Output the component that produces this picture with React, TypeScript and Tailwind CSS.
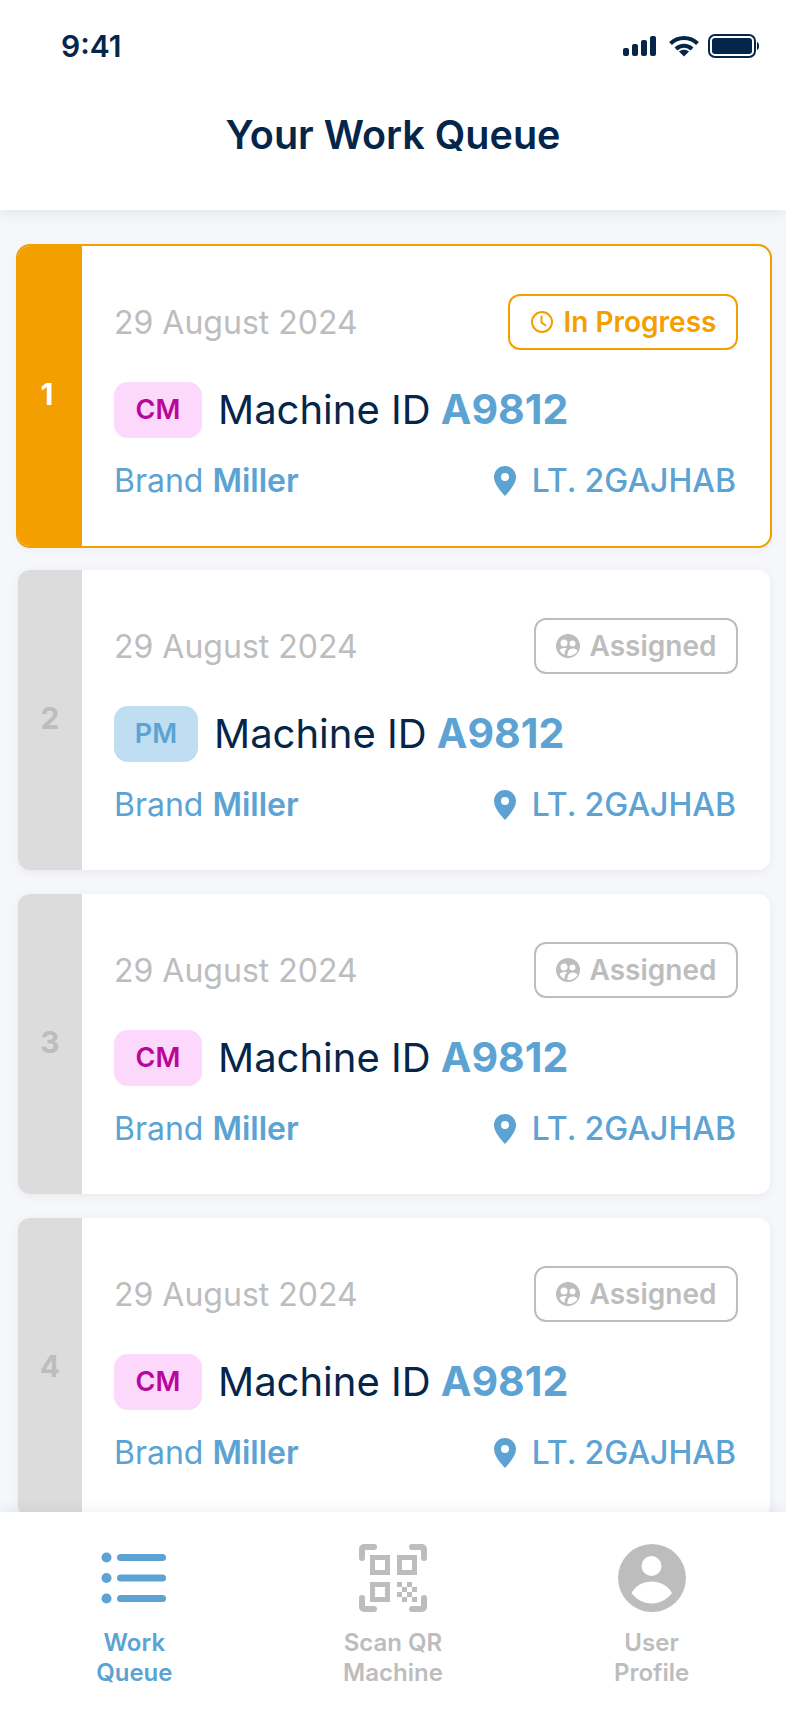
const NAVY = "#05264a";

type Job = {
  position: number;
  tag: "CM" | "PM";
  active?: boolean;
};

const JOBS: Job[] = [
  { position: 1, tag: "CM", active: true },
  { position: 2, tag: "PM" },
  { position: 3, tag: "CM" },
  { position: 4, tag: "CM" },
];

const StatusIcons = () => (
  <div className="flex items-center">
    <svg width="34" height="20" viewBox="0 0 34 20" fill={NAVY}>
      <rect x="0" y="12" width="6" height="8" rx="2" />
      <rect x="9" y="8" width="6" height="12" rx="2" />
      <rect x="18" y="4" width="6" height="16" rx="2" />
      <rect x="27" y="0" width="6" height="20" rx="2" />
    </svg>
    <svg className="ml-[12px]" width="30" height="22" viewBox="0 0 30 22" fill="none" stroke={NAVY} strokeWidth="4">
      <path d="M1.5 8.5C9 1 21 1 28.5 8.5" />
      <path d="M7 14c4.500-4.300 11.500-4.300 16 0" />
      <path d="M15 21.500l-5-5c2.800-2.200 7.200-2.200 10 0z" fill={NAVY} stroke="none" />
    </svg>
    <svg className="ml-[9px]" width="51" height="24" viewBox="0 0 51 24" fill="none">
      <rect x="1" y="1" width="46" height="22" rx="6" stroke={NAVY} strokeWidth="2" />
      <rect x="4" y="4" width="40" height="16" rx="3" fill={NAVY} />
      <path d="M49 8c1.500.5 2 2 2 4s-.5 3.500-2 4z" fill={NAVY} />
    </svg>
  </div>
);

const ClockIcon = () => (
  <svg width="24" height="24" viewBox="0 0 24 24" fill="none" stroke="currentColor" strokeWidth="2" strokeLinecap="round">
    <circle cx="12" cy="12" r="10" />
    <path d="M11.500 6.500V12.500L15.500 15.500" />
  </svg>
);

const AssignedIcon = () => (
  <svg width="24" height="24" viewBox="0 0 24 24" fill="currentColor">
    <path
      fillRule="evenodd"
      d="M12 0a12 12 0 1 0 0 24a12 12 0 0 0 0-24zM8 5.500a3.500 3.500 0 1 1 0 7a3.500 3.500 0 0 1 0-7zM16.500 6.500a3 3 0 1 1 0 6a3 3 0 0 1 0-6zM3.500 16c1-1.500 5-2.500 7.500-1.500c-1.500 1-2.500 3-2.500 6.500c-2.500-1-4-3-5-5zM11.500 22c-.5-4 1.500-7.500 5-7.500s4.500 1.500 5 2.500c-1.500 3-5.500 5.300-10 5z"
    />
  </svg>
);

const PinIcon = () => (
  <svg width="22" height="30" viewBox="0 0 22 30" fill="currentColor">
    <path
      fillRule="evenodd"
      d="M11 0C4.900 0 0 4.900 0 11c0 7.500 8 15.500 11 19c3-3.500 11-11.500 11-19C22 4.900 17.100 0 11 0zm0 7a4 4 0 1 1 0 8a4 4 0 0 1 0-8z"
    />
  </svg>
);

const ListIcon = () => (
  <svg width="66" height="52" viewBox="0 0 66 52" fill="#5ca3d3">
    <circle cx="5.500" cy="5.500" r="5" />
    <circle cx="5.500" cy="26" r="5" />
    <circle cx="5.500" cy="46.500" r="5" />
    <rect x="16" y="2" width="49" height="7" rx="3.500" />
    <rect x="16" y="22.500" width="49" height="7" rx="3.500" />
    <rect x="16" y="43" width="49" height="7" rx="3.500" />
  </svg>
);

const QrIcon = () => (
  <svg width="68" height="68" viewBox="0 0 68 68" fill="none">
    <g stroke="#bdbdbd" strokeWidth="6" strokeLinecap="round" strokeLinejoin="round">
      <path d="M3 14V5a2 2 0 0 1 2-2h10" />
      <path d="M53 3h10a2 2 0 0 1 2 2v9" />
      <path d="M3 54v9a2 2 0 0 0 2 2h10" />
      <path d="M53 65h10a2 2 0 0 0 2-2v-9" />
    </g>
    <g stroke="#bdbdbd" strokeWidth="5">
      <rect x="13.500" y="13.500" width="15" height="15" />
      <rect x="40.500" y="13.500" width="15" height="15" />
      <rect x="13.500" y="40.500" width="15" height="15" />
    </g>
    <g fill="#bdbdbd">
      <rect x="38" y="38" width="5" height="5" />
      <rect x="48" y="38" width="5" height="5" />
      <rect x="43" y="43" width="5" height="5" />
      <rect x="53" y="43" width="5" height="5" />
      <rect x="38" y="48" width="5" height="5" />
      <rect x="48" y="48" width="5" height="5" />
      <rect x="43" y="53" width="5" height="5" />
      <rect x="53" y="53" width="5" height="5" />
    </g>
  </svg>
);

const UserIcon = () => (
  <svg width="68" height="68" viewBox="0 0 68 68">
    <circle cx="34" cy="34" r="34" fill="#bdbdbd" />
    <circle cx="33.500" cy="22" r="10" fill="#fff" />
    <path d="M13.500 49C18 41 26 37.500 33.500 37.500S49.500 41 54 49C49.500 55 42 59.500 33.500 59.500S18 55 13.500 49z" fill="#fff" />
  </svg>
);

const WorkCard = ({ job }: { job: Job }) => (
  <article
    className={`flex h-[300px] shrink-0 overflow-hidden rounded-[12px] bg-white shadow-[0_2px_10px_rgba(15,23,42,0.06)] ${
      job.active ? "outline-2 outline-[#f39f00]" : ""
    }`}
  >
    <div
      className={`flex w-[64px] shrink-0 items-center justify-center pb-[4px] text-[30px] font-bold ${
        job.active ? "bg-[#f39f00] pr-[6px] text-white" : "bg-[#dcdcdc] text-[#bdbdbd]"
      }`}
    >
      {job.position}
    </div>
    <div className="flex min-w-0 flex-1 flex-col pl-[32px] pr-[32px] pt-[48px]">
      <div className="flex h-[56px] items-center justify-between">
        <span className="translate-y-[1px] text-[32px] text-[#bdbdbd]">29 August 2024</span>
        {job.active ? (
          <span className="flex h-[56px] w-[230px] items-center justify-center gap-[10px] rounded-[12px] border-2 border-[#f39f00] text-[28px] font-semibold text-[#f39f00]">
            <ClockIcon />
            In Progress
          </span>
        ) : (
          <span className="flex h-[56px] w-[204px] items-center justify-center gap-[10px] rounded-[12px] border-2 border-[#bdbdbd] text-[28px] font-semibold text-[#bdbdbd]">
            <AssignedIcon />
            Assigned
          </span>
        )}
      </div>
      <div className="mt-[32px] flex h-[56px] items-center">
        {job.tag === "CM" ? (
          <span className="flex h-[56px] w-[88px] items-center justify-center rounded-[14px] bg-[#fdd8fd] text-[27px] font-semibold text-[#b9079b]">
            CM
          </span>
        ) : (
          <span className="flex h-[56px] w-[84px] items-center justify-center rounded-[14px] bg-[#c0def1] text-[27px] font-semibold text-[#5ca3d3]">
            PM
          </span>
        )}
        <span className="ml-[16px] text-[40px] text-[#05264a]">
          Machine ID <span className="-ml-[1px] text-[41px] font-bold text-[#5ca3d3]">A9812</span>
        </span>
      </div>
      <div className="mt-[15px] flex h-[56px] items-center justify-between pr-[2px] text-[32px] text-[#5ca3d3]">
        <span>
          Brand <span className="font-semibold">Miller</span>
        </span>
        <span className="flex items-center gap-[16px] font-medium">
          <PinIcon />
          LT. 2GAJHAB
        </span>
      </div>
    </div>
  </article>
);

const NavItem = ({ icon, lines, active }: { icon: React.ReactNode; lines: string[]; active?: boolean }) => (
  <div className={`flex flex-col items-center ${active ? "text-[#5ca3d3]" : "text-[#bdbdbd]"}`}>
    <div className="flex h-[68px] items-center justify-center">{icon}</div>
    <div className="mt-[16px] text-center text-[24px] font-semibold leading-[30px]">
      {lines.map((line) => (
        <div key={line}>{line}</div>
      ))}
    </div>
  </div>
);

export default function App() {
  return (
    <div className="flex h-[1712px] w-[786px] flex-col overflow-hidden bg-[#f5f7fa] font-['Inter',sans-serif]">
      <header className="relative z-10 h-[210px] shrink-0 bg-white shadow-[0_2px_14px_rgba(30,50,90,0.1)]">
        <div className="flex h-[90px] items-start justify-between pl-[61px] pr-[27px] pt-[28px]">
          <span className="text-[30px] font-semibold leading-[36px] text-[#05264a]">9:41</span>
          <div className="pt-[6px]">
            <StatusIcons />
          </div>
        </div>
        <h1 className="mt-[20px] text-center text-[39.5px] font-semibold leading-[50px] text-[#05264a]">Your Work Queue</h1>
      </header>

      <main className="flex min-h-0 flex-1 flex-col gap-[24px] overflow-hidden pl-[18px] pr-[16px] pt-[36px]">
        {JOBS.map((job) => (
          <WorkCard key={job.position} job={job} />
        ))}
      </main>

      <nav className="relative z-10 grid h-[200px] shrink-0 grid-cols-[1fr_1fr_1fr] bg-white pl-[5px] pr-[5px] pt-[32px] shadow-[0_-2px_12px_rgba(30,50,90,0.08)]">
        <NavItem icon={<ListIcon />} lines={["Work", "Queue"]} active />
        <NavItem icon={<QrIcon />} lines={["Scan QR", "Machine"]} />
        <NavItem icon={<UserIcon />} lines={["User", "Profile"]} />
      </nav>
    </div>
  );
}
